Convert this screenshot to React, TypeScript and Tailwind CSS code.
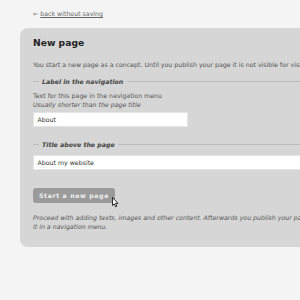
export default function App() {
  return (
    <div className="w-screen h-screen overflow-hidden bg-[#f4f4f4] font-['DejaVu_Sans',sans-serif] text-[6.25px] leading-[9.4px] text-[#555]">
      <div className="pl-[20px] pt-[9.3px]">
        <div className="pl-[13px] h-[9.4px] text-[#666] flex">
          <span className="mr-[2px]">←</span>
          <span className="underline underline-offset-[1px]">back without saving</span>
        </div>
        <div className="mt-[9.3px] w-[560px] bg-[#d6d6d6] rounded-[8px] pl-[13px] pr-[13px] pt-[9.5px] pb-[15.5px] relative">
          <div className="h-[12px] leading-[12px] text-[9.2px] font-bold text-[#222]">New page</div>
          <p className="mt-[10.2px] whitespace-nowrap">
            You start a new page as a concept. Until you publish your page it is not visible for visitors.
          </p>
          <div className="mt-[8px] flex items-center h-[9.4px]">
            <div className="w-[5.5px] h-px bg-[#bcbcbc]" />
            <span className="mx-[3.5px] font-bold italic text-[#444]">Label in the navigation</span>
            <div className="flex-1 h-px bg-[#bcbcbc]" />
          </div>
          <p className="mt-[4.4px]">Text for this page in the navigation menu</p>
          <p className="italic">Usually shorter than the page title</p>
          <div className="mt-[2.2px] w-[155px] h-[15.5px] bg-white border border-[#e4e4e4] flex items-center pl-[3.5px] text-[#333]">
            About
          </div>
          <div className="mt-[12.2px] flex items-center h-[9.4px]">
            <div className="w-[5.5px] h-px bg-[#bcbcbc]" />
            <span className="mx-[3.5px] font-bold italic text-[#444]">Title above the page</span>
            <div className="flex-1 h-px bg-[#bcbcbc]" />
          </div>
          <div className="mt-[5.9px] w-full h-[15.5px] bg-white border border-[#e4e4e4] flex items-center pl-[3.5px] text-[#333]">
            About my website
          </div>
          <div className="mt-[17.5px] flex">
            <div className="h-[15px] pl-[6px] pr-[6.4px] rounded-[3px] bg-[#9a9a9a] text-[#f0f0f0] font-bold tracking-[0.6px] flex items-center">
              Start a new page
            </div>
          </div>
          <p className="mt-[9.7px] italic">
            Proceed with adding texts, images and other content. Afterwards you publish your page and put
            <br />
            it in a navigation menu.
          </p>
          <svg className="absolute left-[92px] top-[169px]" width="7" height="11" viewBox="0 0 7 11">
            <path d="M0.5 0.5 L0.5 8.5 L2.3 6.8 L3.6 9.8 L4.8 9.3 L3.6 6.4 L6 6.4 Z" fill="#fff" stroke="#000" strokeWidth="0.8" strokeLinejoin="round" />
          </svg>
        </div>
      </div>
    </div>
  );
}
